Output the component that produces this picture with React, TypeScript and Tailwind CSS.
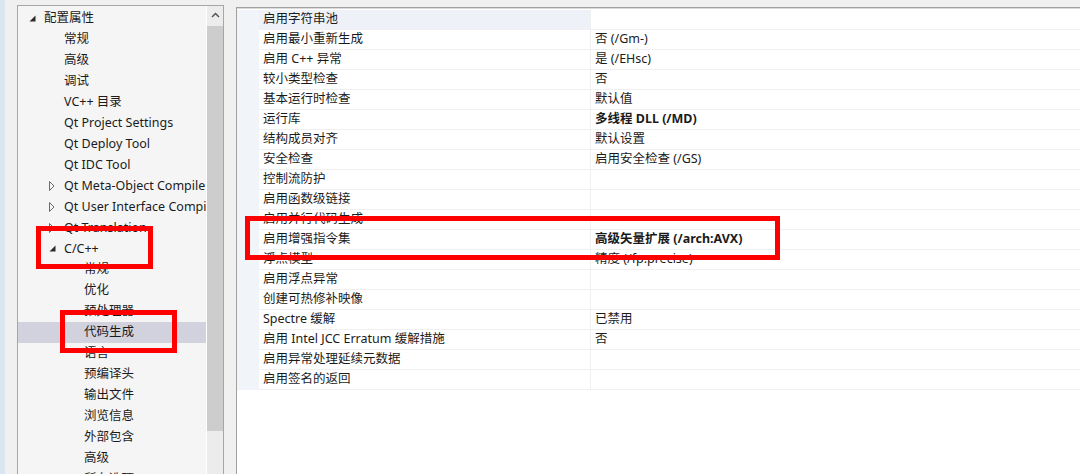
import React from "react";

type TreeItem = { text: string; level: number; arrow?: "open" | "closed"; selected?: boolean };

const tree: TreeItem[] = [
  { text: "配置属性", level: 0, arrow: "open" },
  { text: "常规", level: 1 },
  { text: "高级", level: 1 },
  { text: "调试", level: 1 },
  { text: "VC++ 目录", level: 1 },
  { text: "Qt Project Settings", level: 1 },
  { text: "Qt Deploy Tool", level: 1 },
  { text: "Qt IDC Tool", level: 1 },
  { text: "Qt Meta-Object Compiler", level: 1, arrow: "closed" },
  { text: "Qt User Interface Compiler", level: 1, arrow: "closed" },
  { text: "Qt Translation", level: 1, arrow: "closed" },
  { text: "C/C++", level: 1, arrow: "open" },
  { text: "常规", level: 2 },
  { text: "优化", level: 2 },
  { text: "预处理器", level: 2 },
  { text: "代码生成", level: 2, selected: true },
  { text: "语言", level: 2 },
  { text: "预编译头", level: 2 },
  { text: "输出文件", level: 2 },
  { text: "浏览信息", level: 2 },
  { text: "外部包含", level: 2 },
  { text: "高级", level: 2 },
  { text: "所有选项", level: 2 },
];

type Prop = { name: string; value?: string; bold?: boolean };

const props: Prop[] = [
  { name: "启用字符串池" },
  { name: "启用最小重新生成", value: "否 (/Gm-)" },
  { name: "启用 C++ 异常", value: "是 (/EHsc)" },
  { name: "较小类型检查", value: "否" },
  { name: "基本运行时检查", value: "默认值" },
  { name: "运行库", value: "多线程 DLL (/MD)", bold: true },
  { name: "结构成员对齐", value: "默认设置" },
  { name: "安全检查", value: "启用安全检查 (/GS)" },
  { name: "控制流防护" },
  { name: "启用函数级链接" },
  { name: "启用并行代码生成" },
  { name: "启用增强指令集", value: "高级矢量扩展 (/arch:AVX)", bold: true },
  { name: "浮点模型", value: "精度 (/fp:precise)" },
  { name: "启用浮点异常" },
  { name: "创建可热修补映像" },
  { name: "Spectre 缓解", value: "已禁用" },
  { name: "启用 Intel JCC Erratum 缓解措施", value: "否" },
  { name: "启用异常处理延续元数据" },
  { name: "启用签名的返回" },
];

const font = {
  fontFamily: '"Segoe UI", "Noto Sans", "Noto Sans CJK SC", sans-serif',
};

function OpenArrow() {
  return (
    <svg width="7" height="7" viewBox="0 0 7 7" className="block">
      <polygon points="6.5,0.5 6.5,6.5 0.5,6.5" fill="#2b2b2b" />
    </svg>
  );
}

function ClosedArrow() {
  return (
    <svg width="6" height="10" viewBox="0 0 6 10" className="block">
      <polygon points="0.5,0.5 5,5 0.5,9.5" fill="none" stroke="#6b6b6b" strokeWidth="1" />
    </svg>
  );
}

export default function App() {
  return (
    <div
      className="relative flex h-[474px] w-[1080px] overflow-hidden bg-[#f0f0f0] text-[12.5px] text-[#1b1b1b]"
      style={font}
    >
      <div className="w-[5px] shrink-0 bg-[#dbe5f2]" />
      <div className="w-[12px] shrink-0" />

      {/* Tree panel */}
      <div className="mt-[5px] flex w-[207px] shrink-0 border border-b-0 border-[#a6a6a6]">
        <div className="flex-1 overflow-hidden bg-[#f5f5f5] pt-[2px]">
          {tree.map((t, i) => (
            <div
              key={i}
              className={
                "relative flex h-[20.95px] shrink-0 items-center whitespace-nowrap " +
                (t.selected ? "bg-[#d1d2de]" : "")
              }
            >
              {t.arrow && (
                <div
                  className={
                    "absolute " +
                    (t.level === 0 ? "left-[11px]" : t.level === 1 ? "left-[31px]" : "left-[51px]")
                  }
                >
                  {t.arrow === "open" ? <OpenArrow /> : <ClosedArrow />}
                </div>
              )}
              <span
                className={
                  "leading-none " +
                  (t.level === 0 ? "pl-[26px]" : t.level === 1 ? "pl-[46px]" : "pl-[66px]")
                }
              >
                {t.text}
              </span>
            </div>
          ))}
        </div>
        <div className="flex w-[17px] shrink-0 flex-col border-l border-white bg-[#ececec]">
          <div className="flex h-[17px] items-center justify-center">
            <svg width="9" height="6" viewBox="0 0 9 6">
              <polyline points="1,5 4.5,1.5 8,5" fill="none" stroke="#555" strokeWidth="1.5" />
            </svg>
          </div>
          <div className="mt-[3px] h-[405px] bg-[#cdcdcd]" />
        </div>
      </div>

      <div className="w-[12px] shrink-0" />

      {/* Property grid */}
      <div className="mt-[7px] flex-1 border-l border-t border-[#a0a0a0] bg-white">
        <div className="border-t border-[#dadada] pt-[1px]">
          {props.map((p, i) => (
            <div key={i} className="flex h-[20px]">
              <div className="w-[22px] shrink-0 bg-[#f1f4f9]" />
              <div
                className={
                  "flex w-[332px] shrink-0 items-center border-b border-r border-[#f0f0f0] pl-[4px] whitespace-nowrap " +
                  (i === 0 ? "bg-[#eef2f8]" : "")
                }
              >
                {p.name}
              </div>
              <div
                className={
                  "flex flex-1 items-center border-b border-[#f0f0f0] pl-[4px] whitespace-nowrap " +
                  (p.bold ? "font-bold" : "")
                }
              >
                {p.value ?? ""}
              </div>
            </div>
          ))}
        </div>
      </div>

      {/* Red highlight boxes */}
      <div className="pointer-events-none absolute left-[36px] top-[226px] h-[43px] w-[117px] border-[5px] border-[#ff0000]" />
      <div className="pointer-events-none absolute left-[60px] top-[310px] h-[43px] w-[117px] border-[5px] border-[#ff0000]" />
      <div className="pointer-events-none absolute left-[245px] top-[216px] h-[44px] w-[535px] border-[5px] border-[#ff0000]" />
    </div>
  );
}
